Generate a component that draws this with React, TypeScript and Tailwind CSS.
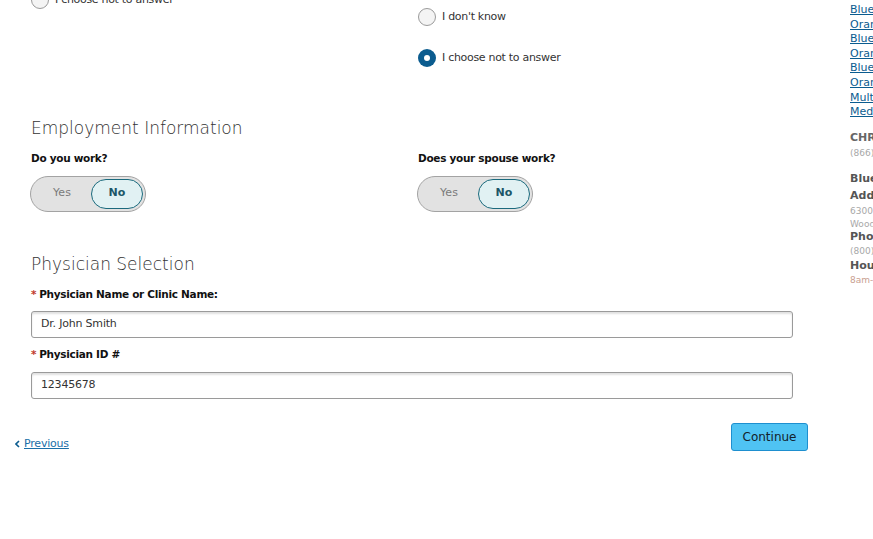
import type { ReactNode } from 'react';

/**
 * Enrollment form – employment and physician step
 */

const FONT = '"DejaVu Sans", "Open Sans", sans-serif';

interface IRadioProps {
  label: string;
  checked?: boolean;
}

function Radio({ label, checked = false }: IRadioProps) {
  return (
    <label className="flex items-center gap-[6px] text-[11px] tracking-[-0.3px] text-[#333]">
      {checked ? (
        <span className="w-[18px] h-[18px] rounded-full bg-[#0b5c8f] flex items-center justify-center">
          <span className="w-[6px] h-[6px] rounded-full bg-white" />
        </span>
      ) : (
        <span className="w-[18px] h-[18px] rounded-full border border-[#9a9a9a] bg-[#f4f4f4]" />
      )}
      <span>{label}</span>
    </label>
  );
}

function YesNoToggle() {
  return (
    <div className="w-[116px] h-[36px] rounded-full border-[1.5px] border-[#a3a3a3] bg-[#e2e2e2] flex items-center p-[2px]">
      <span className="w-[58px] text-center text-[11px] text-[#7a7a7a]">Yes</span>
      <span className="flex-1 h-full rounded-full border-[1.5px] border-[#1b6a7d] bg-[#e1f1f3] flex items-center justify-center text-[11px] font-bold text-[#1c5668]">
        No
      </span>
    </div>
  );
}

function FieldLabel({ children, required = false }: { children: ReactNode; required?: boolean }) {
  return (
    <div className="text-[10.5px] tracking-[-0.3px] font-bold text-[#111] leading-none">
      {required && <span className="text-[#c0392b] mr-[3px]">*</span>}
      {children}
    </div>
  );
}

function TextInput({ value }: { value: string }) {
  return (
    <div className="h-[27px] w-[762px] rounded-[3px] border border-[#9a9a9a] bg-white shadow-[inset_0_2px_2px_rgba(0,0,0,0.12)] flex items-center px-[9px] text-[11px] tracking-[-0.2px] text-[#333]">
      {value}
    </div>
  );
}

const SIDEBAR_LINKS = [
  'Blue Cross',
  'Orange Plan',
  'Blue Shield',
  'Orange Care',
  'Blue Select',
  'Orange Choice',
  'Multi-Plan',
  'Medicare',
];

function Sidebar() {
  return (
    <aside className="w-[140px] shrink-0 pt-[3px] text-[11px] whitespace-nowrap">
      <ul className="flex flex-col">
        {SIDEBAR_LINKS.map(link => (
          <li key={link} className="h-[14.6px] leading-[14.6px]">
            <a className="text-[#0b5c8f] underline">{link}</a>
          </li>
        ))}
      </ul>
      <div className="mt-[11px] h-[14px] leading-[14px] font-bold text-[#666]">CHRISTUS Health</div>
      <div className="mt-[1px] h-[14px] leading-[14px] text-[9px] text-[#a8a8a8]">(866) 000-0000</div>
      <div className="mt-[12px] h-[14px] leading-[14px] font-bold text-[#555]">Blue Cross Office</div>
      <div className="mt-[3px] h-[14px] leading-[14px] font-bold text-[#555]">Address</div>
      <div className="mt-[1px] h-[14px] leading-[14px] text-[9px] text-[#a8a8a8]">6300 Main Street</div>
      <div className="h-[12px] leading-[12px] text-[9px] text-[#a8a8a8]">Woodland, TX 77380</div>
      <div className="h-[14px] leading-[14px] font-bold text-[#555]">Phone</div>
      <div className="mt-[1px] h-[13px] leading-[13px] text-[9px] text-[#a8a8a8]">(800) 000-0000</div>
      <div className="mt-[1px] h-[14px] leading-[14px] font-bold text-[#555]">Hours</div>
      <div className="h-[14px] leading-[14px] text-[9px] text-[#c9a090]">8am-5pm</div>
    </aside>
  );
}

export default function App() {
  return (
    <div
      className="w-[873px] h-[539px] overflow-hidden bg-white flex"
      style={{ fontFamily: FONT }}
    >
      <main className="w-[850px] shrink-0">
        {/* tail of the previous question */}
        <div className="grid grid-cols-[387px_1fr] pl-[31px]">
          <div className="-mt-[9px]">
            <Radio label="I choose not to answer" />
          </div>
          <div className="flex flex-col gap-[23px] pt-[8px]">
            <Radio label="I don't know" />
            <Radio label="I choose not to answer" checked />
          </div>
        </div>

        <section className="pl-[31px] pt-[53px]">
          <h2 className="text-[17px] font-light text-[#333] leading-none">Employment Information</h2>
          <div className="grid grid-cols-[387px_1fr] mt-[16px]">
            <div>
              <FieldLabel>Do you work?</FieldLabel>
              <div className="mt-[12px] -ml-[1px]">
                <YesNoToggle />
              </div>
            </div>
            <div>
              <FieldLabel>Does your spouse work?</FieldLabel>
              <div className="mt-[12px] -ml-[1px]">
                <YesNoToggle />
              </div>
            </div>
          </div>
        </section>

        <section className="pl-[31px] pt-[44px]">
          <h2 className="text-[17px] font-light text-[#333] leading-none">Physician Selection</h2>
          <div className="mt-[16px]">
            <FieldLabel required>Physician Name or Clinic Name:</FieldLabel>
          </div>
          <div className="mt-[12px]">
            <TextInput value="Dr. John Smith" />
          </div>
          <div className="mt-[11px]">
            <FieldLabel required>Physician ID #</FieldLabel>
          </div>
          <div className="mt-[12px]">
            <TextInput value="12345678" />
          </div>
        </section>

        <div className="flex justify-between items-start pl-[15px] w-[808px] mt-[24px]">
          <a className="mt-[13px] flex items-center gap-[4px] text-[11px] tracking-[-0.2px] text-[#1a6fa8]">
            <svg width="5" height="8" viewBox="0 0 5 8" fill="none">
              <path d="M4 1L1 4l3 3" stroke="#0b5c8f" strokeWidth="1.6" />
            </svg>
            <span className="underline">Previous</span>
          </a>
          <button className="w-[77px] h-[28px] rounded-[3px] border border-[#1e8fcf] bg-[#4fc3f3] text-[12px] text-[#13222b]">
            Continue
          </button>
        </div>
      </main>
      <Sidebar />
    </div>
  );
}
